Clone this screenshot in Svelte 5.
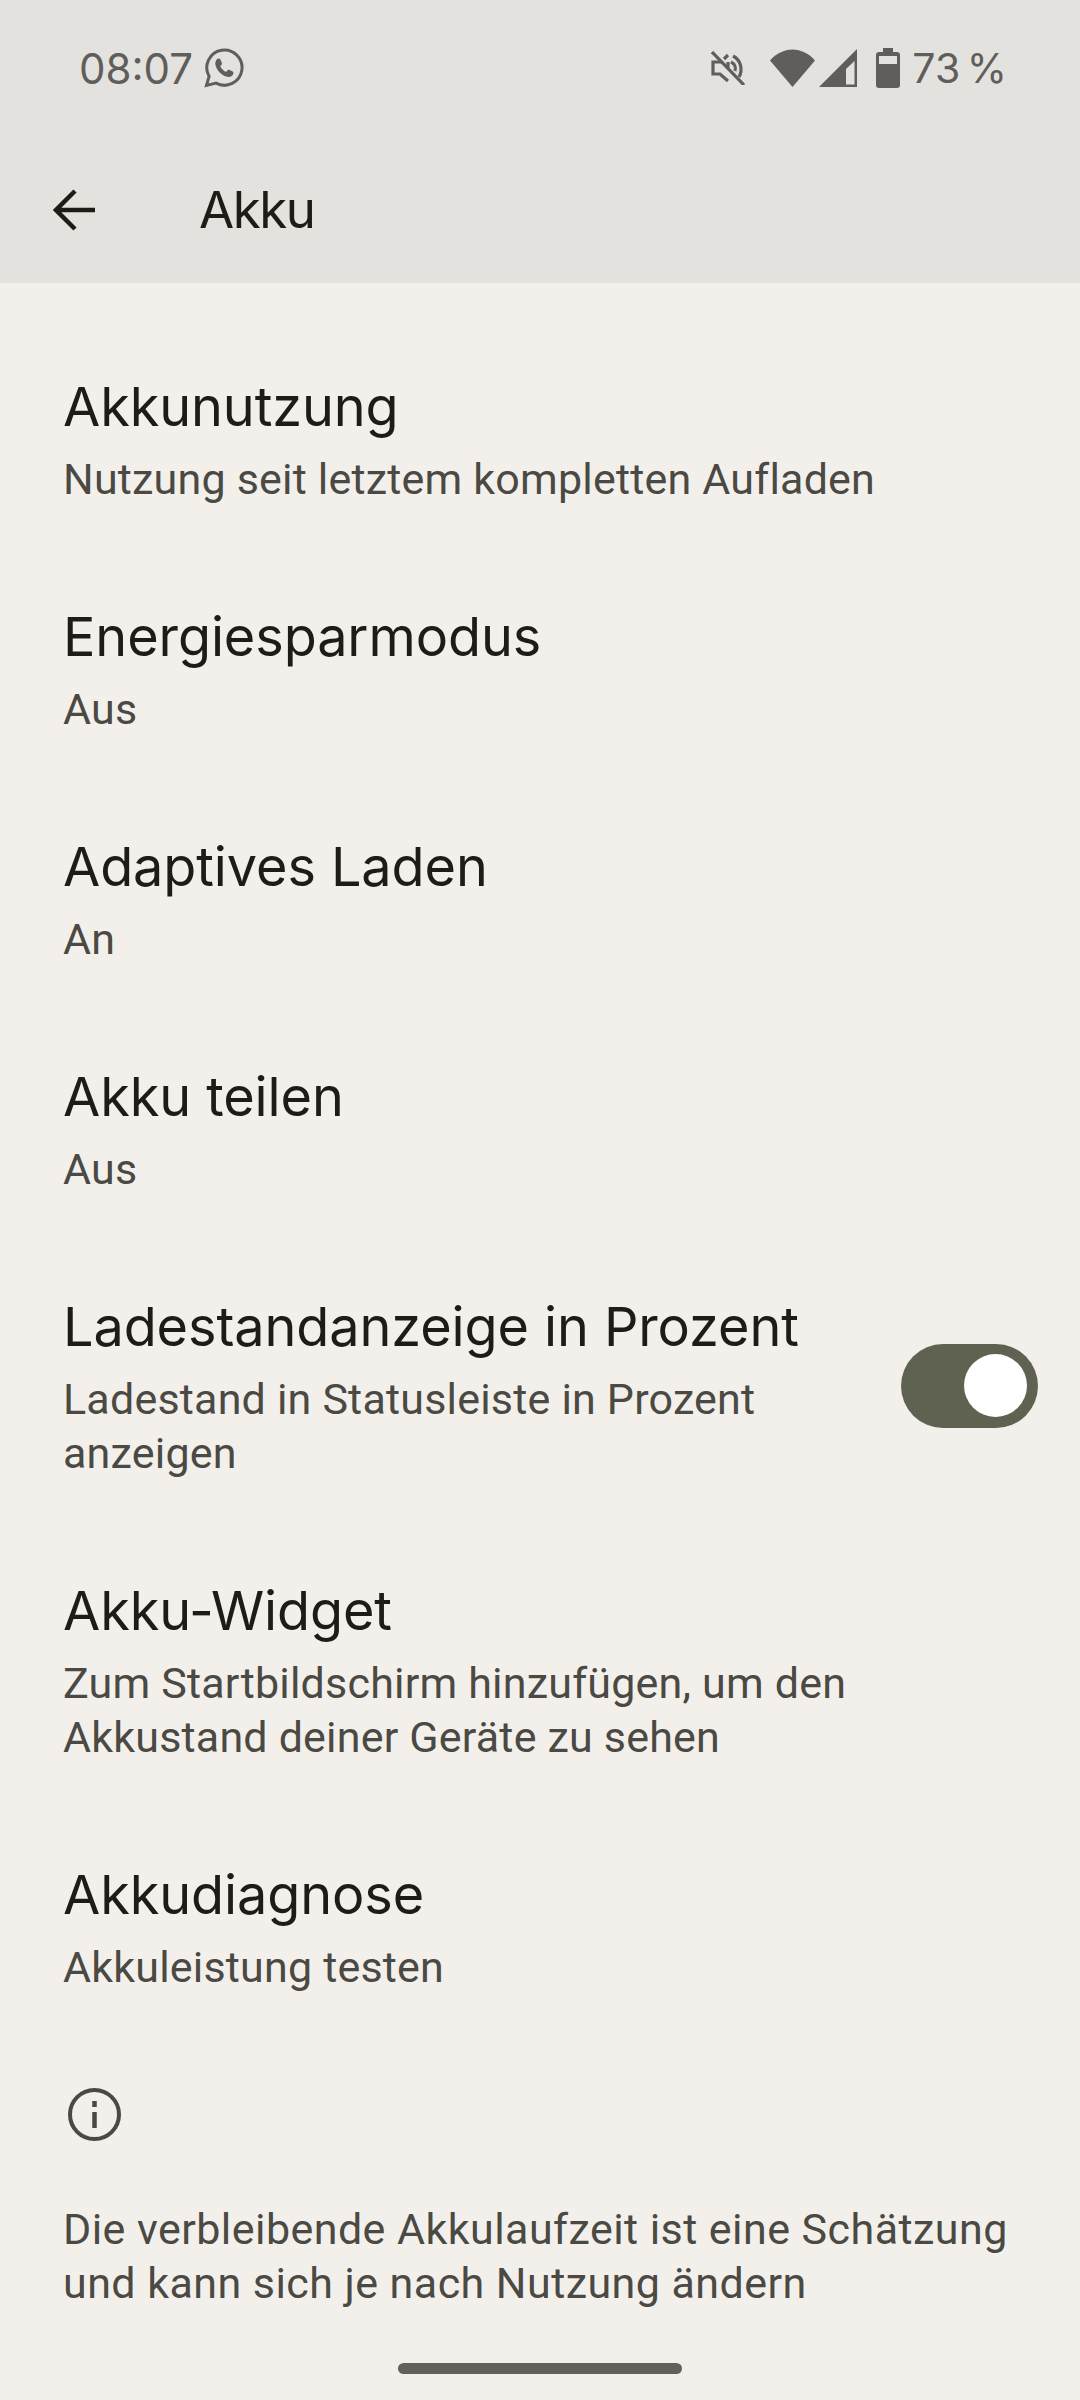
<script lang="ts">
	const rows = [
		{ title: 'Akkunutzung', sub: ['Nutzung seit letztem kompletten Aufladen'] },
		{ title: 'Energiesparmodus', sub: ['Aus'] },
		{ title: 'Adaptives Laden', sub: ['An'] },
		{ title: 'Akku teilen', sub: ['Aus'] },
		{
			title: 'Ladestandanzeige in Prozent',
			sub: ['Ladestand in Statusleiste in Prozent', 'anzeigen'],
			toggle: true
		},
		{
			title: 'Akku-Widget',
			sub: ['Zum Startbildschirm hinzufügen, um den', 'Akkustand deiner Geräte zu sehen']
		},
		{ title: 'Akkudiagnose', sub: ['Akkuleistung testen'] }
	]
</script>

<div class="page">
	<header>
		<div class="status">
			<span class="time">08:07</span>
			<svg class="wa" viewBox="0 0 40 40" width="40" height="40" fill="none" stroke="#5f5e5b">
				<path
					stroke-width="3"
					d="M2.500 37.500l2.600-9.200A17.600 17.600 0 1 1 12 35.100z"
				/>
				<path
					fill="#5f5e5b"
					stroke="none"
					d="M14.600 10.600c.9 0 1.400 0 1.800 1l1.500 3.500c.2.5.1 1-.2 1.400l-1.400 1.700c1 2.300 3.200 4.500 5.800 5.700l1.700-1.800c.4-.4.900-.5 1.400-.3l3.400 1.600c.7.3.9.8.8 1.500-.2 2.600-2.500 4.200-5 4.100-5.900-.5-12.300-6.700-13-12.500-.3-2.600 1-5.900 3.200-5.900z"
				/>
			</svg>
			<span class="spacer"></span>
			<svg class="mute" viewBox="0 0 34 34" width="34" height="34" fill="none" stroke="#5f5e5b" stroke-width="3.200">
				<path d="M1 1l32 33" />
				<path d="M10 11H2v12h7l8 7M17 4l-4 4M17 11v6" />
				<path d="M22 5c8 4 10 14 6 21M20 11c4 2 5 6 4 9" />
			</svg>
			<svg class="wifi" viewBox="0 0 45 38" width="45" height="38">
				<path fill="#5f5e5b" d="M0 11.500C6 4.500 14 .5 22.500 .5S39 4.500 45 11.500L22.500 38z" />
			</svg>
			<svg class="signal" viewBox="0 0 38 38" width="38" height="38" fill="#5f5e5b">
				<path fill-rule="evenodd" d="M38 0v38H0zM35.500 12L27 20v15.500h8.500z" />
			</svg>
			<svg class="battery" viewBox="0 0 24 40" width="24" height="40">
				<path
					fill="#5f5e5b"
					fill-rule="evenodd"
					d="M7 0h10v4h4a3 3 0 0 1 3 3v30a3 3 0 0 1-3 3H3a3 3 0 0 1-3-3V7a3 3 0 0 1 3-3h4zM3 8v8h18V8z"
				/>
			</svg>
			<span class="pct">73 %</span>
		</div>
		<div class="toolbar">
			<svg class="back" viewBox="0 0 42 42" width="42" height="42" fill="none" stroke="#1d1c16" stroke-width="4.500">
				<path d="M42 21H3M22 2L3 21l19 19" />
			</svg>
			<h1>Akku</h1>
		</div>
	</header>

	<main>
		{#each rows as row}
			<div class="row">
				<div class="text">
					<div class="title">{row.title}</div>
					{#each row.sub as line}
						<div class="sub">{line}</div>
					{/each}
				</div>
				{#if row.toggle}
					<div class="switch"><span class="thumb"></span></div>
				{/if}
			</div>
		{/each}

		<div class="footer">
			<svg viewBox="0 0 53 53" width="53" height="53" fill="none" stroke="#4a4943">
				<circle cx="26.500" cy="26.500" r="24.500" stroke-width="4" />
				<path d="M26.500 24v16M26.500 13v6" stroke-width="4.500" />
			</svg>
			<p>Die verbleibende Akkulaufzeit ist eine Schätzung<br />und kann sich je nach Nutzung ändern</p>
		</div>
	</main>

	<div class="pill"></div>
</div>

<style>
	:global(body) {
		margin: 0;
		background: #f3f0eb;
	}

	.page {
		position: relative;
		height: 2400px;
		overflow: hidden;
		font-family: Inter, sans-serif;
	}

	header {
		height: 283px;
		background: #e3e2de;
	}

	.status {
		display: flex;
		align-items: center;
		height: 136px;
		padding: 0 73px 0 79px;
		color: #5f5e5b;
	}

	.time {
		font-size: 42px;
	}

	.wa {
		margin-left: 11px;
	}

	.spacer {
		flex: 1;
	}

	.wifi {
		margin-left: 25px;
	}

	.signal {
		margin-left: 4px;
	}

	.battery {
		margin-left: 19px;
	}

	.pct {
		margin-left: 12px;
		font-size: 41px;
		word-spacing: -5px;
	}

	.toolbar {
		display: flex;
		align-items: center;
		height: 147px;
		padding-left: 53px;
	}

	h1 {
		margin: 0 0 0 104px;
		font-size: 51px;
		letter-spacing: -1.500px;
		font-weight: 400;
		color: #1d1c16;
	}

	main {
		padding-top: 38px;
	}

	.row {
		display: flex;
		align-items: center;
		justify-content: space-between;
		padding: 50px 42px 45px 63px;
	}

	.title {
		font-size: 54px;
		line-height: 72px;
		letter-spacing: -0.1px;
		color: #1d1c16;
		margin-bottom: 9px;
	}

	.sub {
		font-size: 43px;
		line-height: 54px;
		letter-spacing: 0.2px;
		color: #4a4943;
		font-family: Roboto, sans-serif;
	}

	.switch {
		display: flex;
		justify-content: flex-end;
		align-items: center;
		width: 137px;
		height: 84px;
		padding-right: 11px;
		box-sizing: border-box;
		border-radius: 42px;
		background: #5f6250;
	}

	.thumb {
		width: 63px;
		height: 63px;
		border-radius: 50%;
		background: #fff;
	}

	.footer {
		padding: 49px 42px 0 68px;
	}

	.footer svg {
		display: block;
	}

	.footer p {
		margin: 61px 0 0 -5px;
		font-family: Roboto, sans-serif;
		font-size: 43px;
		line-height: 54px;
		letter-spacing: 0.45px;
		color: #4a4943;
	}

	.pill {
		position: absolute;
		left: 398px;
		top: 2363px;
		width: 284px;
		height: 11px;
		border-radius: 6px;
		background: #625f5d;
	}
</style>
